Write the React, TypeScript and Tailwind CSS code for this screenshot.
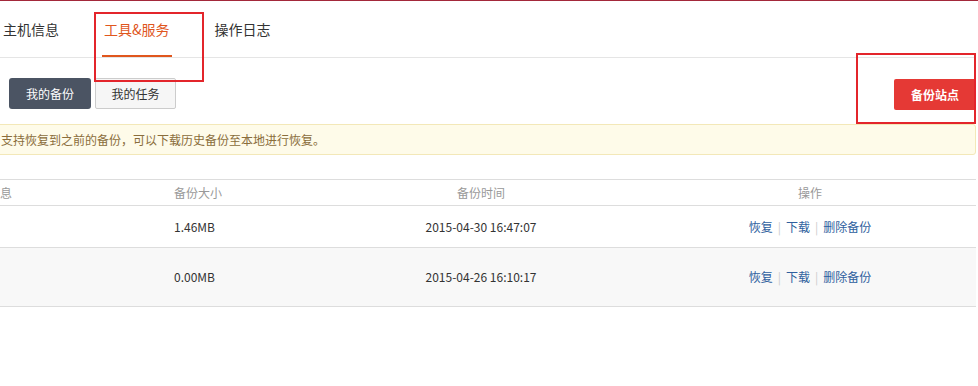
const tabs = [
  { label: "主机信息", active: false },
  { label: "工具&服务", active: true },
  { label: "操作日志", active: false },
];

const backups = [
  { size: "1.46MB", time: "2015-04-30 16:47:07", tall: false },
  { size: "0.00MB", time: "2015-04-26 16:10:17", tall: true },
];

const Actions = () => (
  <div className="flex items-center justify-center gap-[5px] text-[#2f5f9e]">
    <a href="#">恢复</a>
    <span className="text-[#cccccc]">|</span>
    <a href="#">下载</a>
    <span className="text-[#cccccc]">|</span>
    <a href="#">删除备份</a>
  </div>
);

export default function App() {
  return (
    <div
      className="relative w-[978px] h-[386px] overflow-hidden bg-white text-[#333333] border-t border-[#a3283a]"
      style={{ fontFamily: '"Noto Sans CJK SC", "Liberation Sans", sans-serif' }}
    >
      {/* tabs */}
      <div className="w-[976px] h-[57px] border-b border-[#e5e5e5] flex items-start text-[14px] leading-[20px]">
        {tabs.map((t, i) => (
          <div
            key={t.label}
            className={
              "relative h-[56px] pt-[18px] px-[2px] " +
              (i === 0 ? "ml-[1px]" : "ml-[41px]") +
              (t.active ? " text-[#e0561d]" : "")
            }
          >
            {t.label}
            {t.active && <div className="absolute left-0 right-0 bottom-0 h-[2px] bg-[#e0561d]" />}
          </div>
        ))}
      </div>

      {/* buttons */}
      <div className="w-[976px] mt-[20px] flex items-start justify-between text-[12px]">
        <div className="flex gap-[4px] pl-[9px]">
          <button className="w-[82px] h-[31px] rounded-[3px] bg-[#4b5463] text-white">我的备份</button>
          <button className="w-[81px] h-[31px] rounded-[2px] border border-[#cccccc] bg-[#f6f6f6] text-[#333333]">
            我的任务
          </button>
        </div>
        <button className="mt-[1px] w-[82px] h-[31px] rounded-l-[2px] bg-[#e53935] text-white font-bold">备份站点</button>
      </div>

      {/* notice */}
      <div className="w-[980px] -ml-[4px] mt-[14px] h-[31px] pl-[4px] rounded-[3px] border border-[#f3e8b8] bg-[#fefbe9] text-[12px] leading-[29px] text-[#8a6d3b]">
        支持恢复到之前的备份，可以下载历史备份至本地进行恢复。
      </div>

      {/* table */}
      <div className="w-[976px] mt-[24px] text-[12px]">
        <div className="grid grid-cols-[166px_152px_326px_332px] h-[27px] items-center border-y border-[#dddddd] text-[#999999]">
          <div className="whitespace-nowrap">息</div>
          <div className="pl-[8px]">备份大小</div>
          <div className="text-center">备份时间</div>
          <div className="text-center">操作</div>
        </div>
        {backups.map((b) => (
          <div
            key={b.time}
            className={
              "grid grid-cols-[166px_152px_326px_332px] items-center border-b border-[#dddddd] " +
              (b.tall ? "h-[59px] bg-[#f8f8f8]" : "h-[42px] bg-white")
            }
          >
            <div />
            <div className="pl-[8px]">{b.size}</div>
            <div className="text-center">{b.time}</div>
            <Actions />
          </div>
        ))}
      </div>

      {/* annotation boxes */}
      <div className="absolute left-[94px] top-[11px] w-[110px] h-[70px] border-2 border-[#e3252b] pointer-events-none" />
      <div className="absolute left-[856px] top-[52px] w-[120px] h-[71px] border-2 border-[#e3252b] pointer-events-none" />
    </div>
  );
}
